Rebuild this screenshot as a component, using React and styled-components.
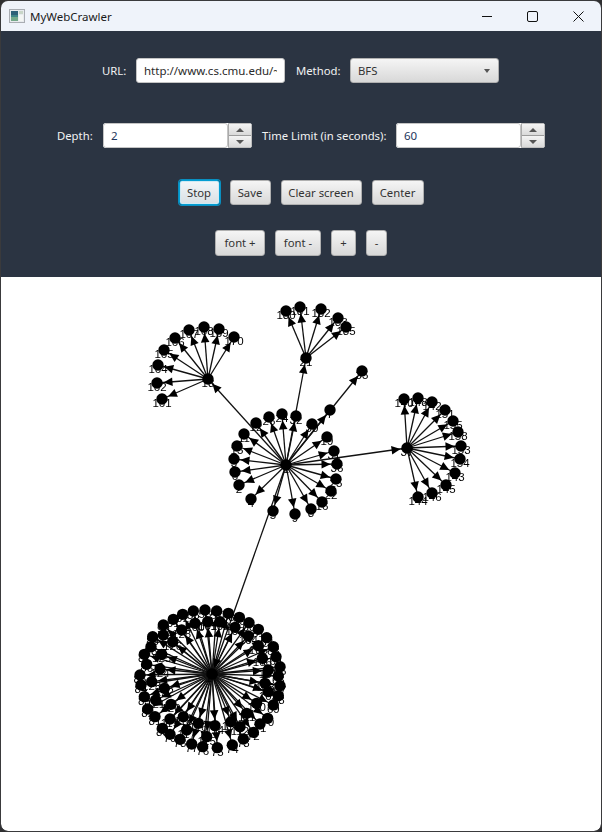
import React from 'react'
import styled, { createGlobalStyle } from 'styled-components'

const GlobalStyle = createGlobalStyle`
  html, body {
    margin: 0;
    padding: 0;
    background: #2f2f31;
  }
  * { box-sizing: border-box; }
`

const Window = styled.div`
  width: 602px;
  height: 832px;
  display: flex;
  flex-direction: column;
  overflow: hidden;
  border: 1px solid #3a3a3c;
  border-radius: 8px;
  font-family: "Noto Sans", sans-serif;
  font-size: 11.3px;
`

const TitleBar = styled.div`
  height: 30px;
  display: flex;
  align-items: center;
  background: #eff3fa;
  color: #1a1a1a;
  padding-left: 8px;
`

const AppName = styled.span`
  margin-left: 5px;
  flex: 1;
  font-size: 11.5px;
`

const WinButton = styled.div`
  width: 45.5px;
  height: 30px;
  display: flex;
  align-items: center;
  justify-content: center;
`

const Panel = styled.div`
  height: 246px;
  background: #2b3442;
  padding-top: 27px;
  display: flex;
  flex-direction: column;
  align-items: center;
`

const Row = styled.div`
  display: flex;
  align-items: center;
  gap: 10px;
  height: 25px;
  margin-top: ${(p) => p.$top || 0}px;
  padding-right: ${(p) => p.$pr || 0}px;
`

const Label = styled.label`
  color: #f2f2f2;
  white-space: nowrap;
  width: ${(p) => p.$w}px;
  margin-left: ${(p) => p.$ml || 0}px;
`

const TextBox = styled.input`
  width: ${(p) => p.$w || 149}px;
  height: 25px;
  border: 1px solid #c4c4c4;
  border-radius: 3px;
  background: #fff;
  padding: 0 7px;
  color: ${(p) => p.$color || '#2a2a2a'};
  font-family: "Noto Sans", sans-serif;
  font-size: 11.5px;
  outline: none;
`

const Combo = styled.div`
  width: 149px;
  height: 25px;
  border: 1px solid #b0b0b0;
  border-radius: 3px;
  background: linear-gradient(#f5f5f5, #d8d8d8);
  padding: 0 8px 0 7px;
  display: flex;
  align-items: center;
  justify-content: space-between;
  color: #333;
`

const Caret = styled.span`
  width: 0;
  height: 0;
  border-left: 3.5px solid transparent;
  border-right: 3.5px solid transparent;
  border-top: 4px solid #555;
`

const Spinner = styled.div`
  width: 149px;
  height: 25px;
  display: flex;
  border-radius: 3px;
  overflow: hidden;
  background: #fff;
`

const SpinArrows = styled.div`
  width: 24px;
  display: flex;
  flex-direction: column;
  gap: 1px;
  background: #9c9c9c;
  border: 1px solid #bdbdbd;
  border-left: 1px solid #aaa;
  border-radius: 0 3px 3px 0;
`

const SpinButton = styled.div`
  flex: 1;
  display: flex;
  align-items: center;
  justify-content: center;
  background: linear-gradient(#f4f4f4, #d9d9d9);
`

const Tri = styled.span`
  width: 0;
  height: 0;
  border-left: 4px solid transparent;
  border-right: 4px solid transparent;
  ${(p) => (p.$up ? 'border-bottom: 4px solid #555;' : 'border-top: 4px solid #555;')}
`

const Button = styled.button`
  width: ${(p) => p.$w}px;
  height: ${(p) => p.$h || 25}px;
  padding: 0;
  border: 1px solid ${(p) => (p.$focused ? '#039ed3' : '#b0b0b0')};
  border-radius: 3px;
  background: ${(p) => (p.$focused ? 'linear-gradient(#f2f6f9, #d9e0e4)' : 'linear-gradient(#f5f5f5, #d8d8d8)')};
  box-shadow: ${(p) => (p.$focused ? '0 0 0 1px #0a8fc0, inset 0 0 0 1px #cfe9f3' : 'none')};
  color: #333;
  font-family: "Noto Sans", sans-serif;
  font-size: 11.3px;
`

const Canvas = styled.div`
  flex: 1;
  background: #fff;
  border-radius: 0 0 7px 7px;
  overflow: hidden;
`

const GraphSvg = styled.svg`
  display: block;
  width: 100%;
  height: 100%;
  filter: grayscale(1);
  text {
    font-family: "Liberation Sans", Arial, sans-serif;
    font-size: 11.5px;
    text-anchor: middle;
    fill: #000;
  }
`

const AppIcon = () => (
  <svg width="16" height="14" viewBox="0 0 16 14">
    <rect x="0.5" y="0.5" width="15" height="13" fill="#e8ebee" stroke="#a9adb3" />
    <rect x="2" y="2" width="7" height="10" fill="#3f8487" />
    <rect x="2" y="2" width="7" height="4" fill="#2d5f78" />
    <rect x="2" y="8" width="7" height="4" fill="#74a88a" />
    <rect x="10" y="2" width="4" height="3" fill="#c9d6c8" />
    <rect x="10" y="6" width="4" height="6" fill="#f4f6f4" />
  </svg>
)

// nodes in page coordinates: [x, y, label]
const hubA = [286, 465, '1']
const hubB = [208, 379, '18']
const hubC = [306, 358, '21']
const hubD = [407, 448, '37']
const hubE = [212, 674, '17']

const childrenA = [
  [256, 423, '12'], [269, 417, '26'], [282, 414, '24'], [296, 416, '32'], [312, 424, '30'],
  [330, 410, '7'], [362, 371, '35'], [327, 437, '19'], [334, 451, '31'], [337, 464, '36'],
  [336, 479, '25'], [331, 491, '22'], [322, 502, '16'], [311, 509, '8'], [295, 514, '9'],
  [273, 511, '5'], [251, 499, '4'], [239, 485, '2'], [235, 472, '6'], [234, 459, '3'],
  [237, 446, '15'], [244, 434, '11'],
  hubB, hubC, hubD, hubE,
]

const childrenB = [
  [234, 337, '170'], [219, 329, '169'], [204, 327, '168'], [189, 330, '167'], [175, 338, '166'],
  [164, 350, '165'], [158, 365, '164'], [157, 383, '162'], [162, 399, '161'],
]

const childrenC = [
  [286, 311, '180'], [300, 307, '181'], [321, 309, '182'], [338, 318, '183'], [346, 327, '185'],
]

const childrenD = [
  [404, 399, '140'], [418, 398, '148'], [432, 402, '142'], [445, 410, '151'], [453, 421, '155'],
  [458, 432, '158'], [461, 446, '153'], [460, 459, '154'], [455, 473, '143'], [446, 485, '145'],
  [432, 493, '146'], [418, 497, '144'],
]

// the big cluster was easier to read off as a 3x crop at (125, 595)
const outerRing = [
  [205, 48], [240, 45], [275, 48], [310, 55], [343, 67], [372, 83], [400, 103], [425, 128],
  [445, 155], [453, 185], [465, 215], [460, 243], [465, 272], [460, 302], [445, 330], [428, 370],
  [405, 387], [385, 412], [355, 432], [322, 450], [277, 458], [233, 455], [200, 447], [165, 433],
  [135, 418], [112, 400], [90, 365], [68, 342], [58, 305], [48, 270], [45, 240], [65, 208],
  [58, 178], [78, 155], [83, 125], [115, 90], [145, 73], [173, 58],
]
const innerRing = [
  [210, 85], [248, 80], [285, 80], [330, 97], [370, 123], [400, 152], [412, 190], [430, 225],
  [420, 265], [430, 290], [395, 325], [365, 355], [345, 395], [318, 380], [270, 392], [245, 425],
  [220, 385], [185, 405], [175, 365], [135, 372], [138, 328], [92, 315], [118, 280], [80, 260],
  [105, 222], [110, 178], [143, 140], [115, 120], [170, 105],
]
const toPage = ([x, y], label) => [125 + x / 3, 595 + y / 3, String(label)]
const childrenE = [
  ...outerRing.map((p, i) => toPage(p, 55 + i)),
  ...innerRing.map((p, i) => toPage(p, 100 + i)),
]

const groups = [
  [hubA, childrenA],
  [hubB, childrenB],
  [hubC, childrenC],
  [hubD, childrenD],
  [hubE, childrenE],
]

const NODE_R = 5.7
const TIP_GAP = 6.5
const HEAD_LEN = 9
const HEAD_W = 4.3

function arrowHead(from, to) {
  const dx = to[0] - from[0]
  const dy = to[1] - from[1]
  const len = Math.hypot(dx, dy)
  const ux = dx / len
  const uy = dy / len
  const tipX = to[0] - ux * TIP_GAP
  const tipY = to[1] - uy * TIP_GAP
  const baseX = tipX - ux * HEAD_LEN
  const baseY = tipY - uy * HEAD_LEN
  return `${tipX},${tipY} ${baseX - uy * HEAD_W},${baseY + ux * HEAD_W} ${baseX + uy * HEAD_W},${baseY - ux * HEAD_W}`
}

const Graph = () => {
  const nodes = [hubA, ...groups.flatMap(([, kids]) => kids)]
  return (
    <GraphSvg viewBox="1 277 600 554">
      {groups.map(([hub, kids]) =>
        kids.map((kid) => (
          <line key={`l${hub[2]}-${kid[2]}`} x1={hub[0]} y1={hub[1]} x2={kid[0]} y2={kid[1]} stroke="#111" strokeWidth="1.3" />
        ))
      )}
      {groups.map(([hub, kids]) =>
        kids.map((kid) => (
          <polygon key={`a${hub[2]}-${kid[2]}`} points={arrowHead(hub, kid)} fill="#000" />
        ))
      )}
      {nodes.map((n) => (
        <circle key={`n${n[2]}`} cx={n[0]} cy={n[1]} r={NODE_R} fill="#000" />
      ))}
      {nodes.map((n) => (
        <text key={`t${n[2]}`} x={n[0]} y={n[1] + 8}>{n[2]}</text>
      ))}
    </GraphSvg>
  )
}

const SpinnerField = ({ value }) => (
  <Spinner>
    <TextBox $w={125} $color="#23365c" defaultValue={value} readOnly />
    <SpinArrows>
      <SpinButton><Tri $up /></SpinButton>
      <SpinButton><Tri /></SpinButton>
    </SpinArrows>
  </Spinner>
)

export default function App() {
  return (
    <>
      <GlobalStyle />
      <Window>
        <TitleBar>
          <AppIcon />
          <AppName>MyWebCrawler</AppName>
          <WinButton>
            <svg width="10" height="10" viewBox="0 0 10 10"><path d="M0 5.5h10" stroke="#111" fill="none" /></svg>
          </WinButton>
          <WinButton>
            <svg width="11" height="11" viewBox="0 0 11 11"><rect x="0.5" y="0.5" width="10" height="10" rx="1.5" stroke="#111" fill="none" /></svg>
          </WinButton>
          <WinButton>
            <svg width="11" height="11" viewBox="0 0 11 11"><path d="M0.5 0.5l10 10M10.5 0.5l-10 10" stroke="#111" fill="none" /></svg>
          </WinButton>
        </TitleBar>
        <Panel>
          <Row $pr={1}>
            <Label $w={24}>URL:</Label>
            <TextBox defaultValue="http://www.cs.cmu.edu/~" readOnly />
            <Label $w={44} $ml={1}>Method:</Label>
            <Combo>
              <span>BFS</span>
              <Caret />
            </Combo>
          </Row>
          <Row $top={40}>
            <Label $w={36}>Depth:</Label>
            <SpinnerField value="2" />
            <Label $w={124}>Time Limit (in seconds):</Label>
            <SpinnerField value="60" />
          </Row>
          <Row $top={32}>
            <Button $w={41} $focused>Stop</Button>
            <Button $w={41}>Save</Button>
            <Button $w={81}>Clear screen</Button>
            <Button $w={52}>Center</Button>
          </Row>
          <Row $top={25}>
            <Button $w={50} $h={26}>font +</Button>
            <Button $w={46} $h={26}>font -</Button>
            <Button $w={25} $h={26}>+</Button>
            <Button $w={21} $h={26}>-</Button>
          </Row>
        </Panel>
        <Canvas>
          <Graph />
        </Canvas>
      </Window>
    </>
  )
}
